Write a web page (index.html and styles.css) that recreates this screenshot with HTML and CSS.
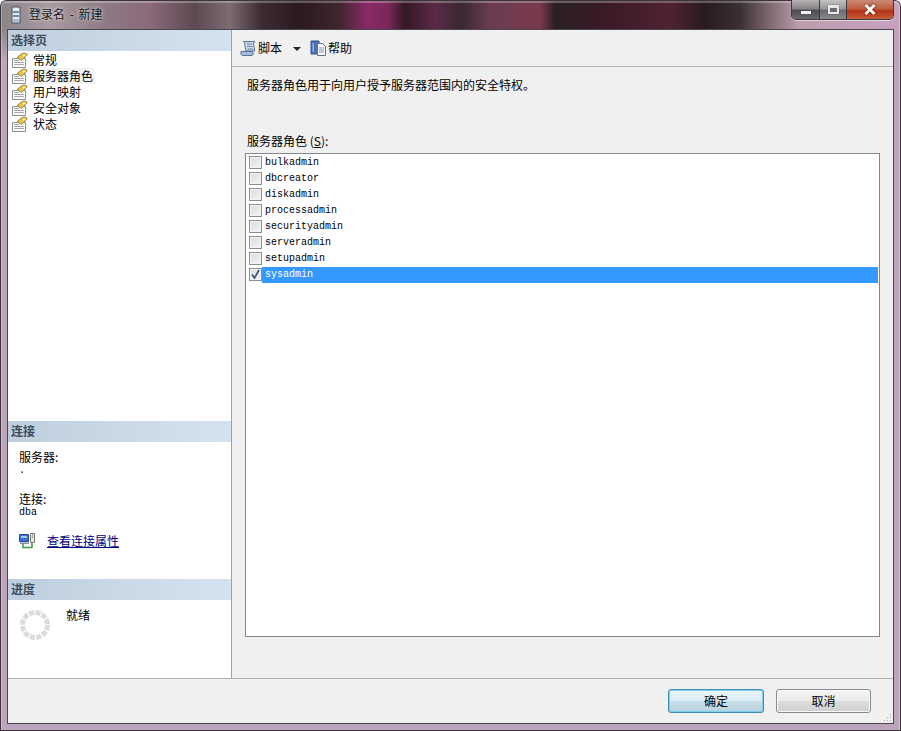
FILE: index.html
```html
<!DOCTYPE html>
<html lang="zh-CN">
<head>
<meta charset="utf-8">
<title>登录名 - 新建</title>
<link rel="stylesheet" href="styles.css">
</head>
<body>
<svg class="defs" width="0" height="0" aria-hidden="true">
  <symbol id="page" viewBox="0 0 16 16">
    <path d="M0.5 6.5H13.5V15.5H0.5Z" fill="#fafafa" stroke="#8f9088"/>
    <path d="M2 8.5H7M2 10.5H12M2 12.5H12" stroke="#a4a8b0"/>
    <path d="M5 5.5L10 1.5L13 1L15.5 2.5L13 5L9.5 8.5Z" fill="#e8c050" stroke="#8a7428" stroke-width=".8"/>
    <path d="M11 2.2L14.4 2.6L11 5.2Z" fill="#fff0a8"/>
  </symbol>
</svg>
<div class="window">
  <header class="titlebar">
    <svg class="app-icon" width="10" height="18" viewBox="0 0 10 18">
      <path d="M1 1H9V17H1Z" fill="#e4eaf0" stroke="#46505c"/>
      <path d="M2 5H8V7H2ZM2 9H8V11H2Z" fill="#6d8aa8"/>
      <path d="M2 13H8V16H2Z" fill="#a8bed2"/>
    </svg>
    <span class="title-text">登录名 - 新建</span>
    <div class="caption">
      <div class="cap cap-min"><span class="min-glyph"></span></div>
      <div class="cap cap-max"><span class="max-glyph"></span></div>
      <div class="cap cap-close">
        <svg width="12" height="11" viewBox="0 0 12 11"><path d="M1.5 1L10.5 10M10.5 1L1.5 10" stroke="#fff" stroke-width="2.8"/></svg>
      </div>
    </div>
  </header>
  <div class="client">
    <div class="main">
      <aside class="sidebar">
        <section class="side-pages">
          <h2 class="side-head">选择页</h2>
          <ul class="nav">
            <li class="nav-item"><svg class="nav-icon"><use href="#page"/></svg><span class="nav-label">常规</span></li>
            <li class="nav-item"><svg class="nav-icon"><use href="#page"/></svg><span class="nav-label nav-current">服务器角色</span></li>
            <li class="nav-item"><svg class="nav-icon"><use href="#page"/></svg><span class="nav-label">用户映射</span></li>
            <li class="nav-item"><svg class="nav-icon"><use href="#page"/></svg><span class="nav-label">安全对象</span></li>
            <li class="nav-item"><svg class="nav-icon"><use href="#page"/></svg><span class="nav-label">状态</span></li>
          </ul>
        </section>
        <section class="side-conn">
          <h2 class="side-head">连接</h2>
          <div class="conn-body">
            <div class="conn-label">服务器:</div>
            <div class="conn-value">.</div>
            <div class="conn-label conn-gap">连接:</div>
            <div class="conn-value">dba</div>
            <div class="conn-link-row">
              <svg width="16" height="16" viewBox="0 0 16 16">
                <path d="M0.5 1.5H9.5V8.5H0.5Z" fill="#3b6fd0" stroke="#2a4a90"/>
                <path d="M2 3H8V5H2Z" fill="#a8c8f4"/>
                <path d="M1 9.5H10V11H1Z" fill="#7a8ca8"/>
                <path d="M11.5 0.5H15.5V9.5H11.5Z" fill="#e4e4e0" stroke="#7a7a70"/>
                <path d="M13 2H14M13 4H14" stroke="#667"/>
                <path d="M4 11V14.5H13V10" fill="none" stroke="#3aa040" stroke-width="1.5"/>
              </svg>
              <a class="conn-link" href="#">查看连接属性</a>
            </div>
          </div>
        </section>
        <section class="side-progress">
          <h2 class="side-head">进度</h2>
          <div class="progress-body">
            <svg class="spinner" width="30" height="30" viewBox="0 0 30 30">
              <circle cx="15" cy="15" r="12.5" fill="none" stroke="#dcdcdc" stroke-width="5" stroke-dasharray="5.2 1.35"/>
            </svg>
            <span class="progress-text">就绪</span>
          </div>
        </section>
      </aside>
      <main class="pane">
        <div class="toolbar">
          <div class="tool">
            <svg width="17" height="17" viewBox="0 0 17 17">
              <path d="M3.5 1.5H15C13.5 2.5 13.3 4 13.8 6L14.8 11H6L5 6C4.5 4 5 2.5 3.5 1.5Z" fill="#cfdcea" stroke="#54709a"/>
              <path d="M1 11.5H12.5C13.5 13 13.5 15 12 15.5H3C1 15.5 .3 13 1 11.5Z" fill="#a8bcd6" stroke="#54709a"/>
              <path d="M6.5 4H12.5M7 6.5H12.5M7.5 9H13" stroke="#6a84aa"/>
            </svg>
            <span>脚本</span>
          </div>
          <span class="tool-arrow"></span>
          <div class="tool tool-help">
            <svg width="17" height="17" viewBox="0 0 17 17">
              <path d="M1 1H9V14H1Z" fill="#4a70b8" stroke="#34508c"/>
              <path d="M2.5 3H4V12H2.5Z" fill="#8fb0e0"/>
              <path d="M7.5 3.5H12.5L15.5 6.5V15.5H7.5Z" fill="#f6f8fc" stroke="#5a6f92"/>
              <path d="M9 8H14M9 10H14M9 12H14" stroke="#8a9ab4"/>
            </svg>
            <span>帮助</span>
          </div>
        </div>
        <div class="content">
          <p class="desc">服务器角色用于向用户授予服务器范围内的安全特权。</p>
          <label class="list-label">服务器角色 (<u>S</u>):</label>
          <div class="list">
            <div class="row"><span class="check"></span><span class="row-text">bulkadmin</span></div>
            <div class="row"><span class="check"></span><span class="row-text">dbcreator</span></div>
            <div class="row"><span class="check"></span><span class="row-text">diskadmin</span></div>
            <div class="row"><span class="check"></span><span class="row-text">processadmin</span></div>
            <div class="row"><span class="check"></span><span class="row-text">securityadmin</span></div>
            <div class="row"><span class="check"></span><span class="row-text">serveradmin</span></div>
            <div class="row"><span class="check"></span><span class="row-text">setupadmin</span></div>
            <div class="row"><span class="check"><svg width="11" height="11" viewBox="0 0 11 11"><path d="M2 5.5L4.5 9L9 1" fill="none" stroke="#3c4f78" stroke-width="1.6"/></svg></span><span class="row-text row-selected">sysadmin</span></div>
          </div>
        </div>
      </main>
    </div>
    <footer class="footer">
      <button class="btn btn-default" type="button">确定</button>
      <button class="btn" type="button">取消</button>
      <svg class="grip" width="10" height="10" viewBox="0 0 10 10">
        <path d="M8 2H9V3H8ZM5 5H6V6H5ZM8 5H9V6H8ZM2 8H3V9H2ZM5 8H6V9H5ZM8 8H9V9H8Z" fill="#b0b0b0"/>
      </svg>
    </footer>
  </div>
</div>
</body>
</html>
```
FILE: styles.css
```css
* { box-sizing: border-box; }
html, body { margin: 0; padding: 0; }
body {
  width: 901px;
  height: 731px;
  overflow: hidden;
  background: #fff;
  font-family: "Noto Sans CJK SC", "Liberation Sans", sans-serif;
  font-size: 12px;
  line-height: 16px;
  color: #000;
}
.defs { position: absolute; }
.window {
  width: 901px;
  height: 731px;
  display: flex;
  flex-direction: column;
  border-radius: 6px 6px 0 0;
  box-shadow: inset 0 0 0 1px #3c3438, inset 0 1px 0 2px rgba(255,255,255,.28);
  background:
    linear-gradient(180deg, rgba(190,165,190,0) 0, rgba(190,165,190,0) 29px, rgba(190,165,190,1) 60px),
    linear-gradient(90deg, #8a8488 0, #a89aa0 50px, #8e7a84 105px, #8a6a78 150px, #5c4a52 195px, #7c6c72 230px, #3c2a32 262px, #2a1a20 300px, #40262f 340px, #8a2a68 368px, #7a2858 388px, #341824 405px, #5a2a48 435px, #3a2830 462px, #6a3c52 490px, #7a3a4c 540px, #2a1f24 555px, #3c1a28 610px, #4e2232 670px, #2a1a20 705px, #3a3034 740px, #806a72 770px, #bc9eae 800px, #c8a2c0 901px);
}
.titlebar {
  height: 29px;
  flex: none;
  display: flex;
  align-items: flex-start;
  padding-left: 11px;
}
.app-icon { margin-top: 6px; flex: none; }
.title-text {
  margin: 6px 0 0 8px;
  color: #141414;
  word-spacing: 2px;
  text-shadow: 0 0 4px rgba(255,255,255,.7), 0 0 2px rgba(255,255,255,.5);
}
.caption {
  margin-left: auto;
  margin-right: 7px;
  width: 103px;
  height: 20px;
  display: flex;
  border: 1px solid #3c3c40;
  border-top: 0;
  border-radius: 0 0 5px 5px;
  overflow: hidden;
  box-shadow: 0 1px 0 rgba(255,255,255,.55);
}
.cap {
  height: 100%;
  display: flex;
  align-items: center;
  justify-content: center;
  border-right: 1px solid #3c3c40;
}
.cap-min { width: 28px; background: linear-gradient(180deg, #b4b0b2 0, #88868a 45%, #4f4c50 55%, #6c6a6e 100%); }
.cap-max { width: 27px; background: linear-gradient(180deg, #c4c2c4 0, #9a989c 45%, #6e6c70 55%, #8a888c 100%); }
.cap-close { flex: 1; border-right: 0; background: linear-gradient(180deg, #c88a76 0, #c25c3e 45%, #b23418 58%, #c85c38 100%); }
.min-glyph {
  width: 10px;
  height: 3px;
  margin-top: 6px;
  background: #f4f4f4;
  box-shadow: 0 0 1px #333;
}
.max-glyph {
  width: 11px;
  height: 9px;
  border: 2px solid #e8e8e8;
  border-top-width: 3px;
  background: #6c6a70;
  box-shadow: 0 0 1px #333;
}
.cap-close svg { display: block; filter: drop-shadow(0 0 1px #5a1808); }
.client {
  flex: 1;
  min-height: 0;
  margin: 0 7px 7px;
  display: flex;
  flex-direction: column;
  border: 1px solid #4a4650;
  background: #f0f0f0;
}
.main {
  flex: 1;
  min-height: 0;
  display: flex;
}
.sidebar {
  width: 224px;
  flex: none;
  display: flex;
  flex-direction: column;
  background: #fff;
  border-right: 1px solid #a0a0a0;
}
.side-pages { height: 391px; }
.side-conn { height: 158px; }
.side-progress { flex: 1; }
.side-head {
  margin: 0;
  height: 21px;
  padding: 2px 0 0 3px;
  font-size: 12px;
  font-weight: 700;
  line-height: 16px;
  color: #3c4c5a;
  background: linear-gradient(90deg, #bfcedc 0, #d5e3f0 100%);
}
.nav { list-style: none; margin: 0; padding: 1px 0 0 4px; }
.nav-item { display: flex; align-items: center; height: 16px; }
.nav-icon { width: 16px; height: 16px; flex: none; }
.nav-label { margin-left: 5px; padding: 0 1px 0 0; line-height: 16px; }
.nav-current { margin-left: 4px; padding: 0 2px 0 1px; background: #f2f2f2; }
.conn-body { padding: 7px 0 0 11px; }
.conn-label { height: 16px; }
.conn-value {
  height: 12px;
  line-height: 12px;
  font-family: "Liberation Mono", monospace;
  font-size: 10px;
}
.conn-gap { margin-top: 14px; }
.conn-link-row {
  display: flex;
  align-items: center;
  margin-top: 14px;
}
.conn-link { margin-left: 12px; color: #000080; text-decoration: underline; }
.progress-body {
  display: flex;
  align-items: flex-start;
  padding: 10px 0 0 12px;
}
.spinner { flex: none; }
.progress-text { margin: -3px 0 0 16px; }
.pane {
  flex: 1;
  min-width: 0;
  display: flex;
  flex-direction: column;
}
.toolbar {
  height: 37px;
  flex: none;
  display: flex;
  align-items: center;
  padding-left: 8px;
  border-bottom: 1px solid #b4b4b4;
}
.tool { display: flex; align-items: center; gap: 1px; }
.tool-arrow {
  width: 0;
  height: 0;
  margin: 1px 0 0 11px;
  border: 4px solid transparent;
  border-top: 4px solid #222;
  border-bottom: 0;
}
.tool-help { margin-left: 9px; }
.content {
  flex: 1;
  min-height: 0;
  display: flex;
  flex-direction: column;
  padding: 10px 13px 41px 13px;
}
.desc { margin: 0 0 40px 2px; }
.list-label { display: block; margin: 0 0 4px 2px; }
.list-label u { text-decoration: underline; }
.list {
  flex: 1;
  min-height: 0;
  padding: 1px 1px 0 0;
  background: #fff;
  border: 1px solid #828790;
}
.row {
  height: 16px;
  display: flex;
  align-items: center;
  padding-left: 3px;
  font-family: "Liberation Mono", monospace;
  font-size: 10px;
  line-height: 14px;
}
.check {
  width: 13px;
  height: 13px;
  flex: none;
  margin-top: -2px;
  display: flex;
  align-items: center;
  justify-content: center;
  border: 1px solid #8e8f8f;
  background: linear-gradient(135deg, #dcdcdc 0, #f2f2f2 100%);
  box-shadow: inset 0 0 0 1px #f4f4f4;
}
.check svg { display: block; }
.row-text {
  flex: 1;
  height: 16px;
  padding: 0 0 0 3px;
  line-height: 16px;
}
.row-selected { background: #3399ff; color: #fff; }
.footer {
  height: 45px;
  flex: none;
  position: relative;
  display: flex;
  justify-content: flex-end;
  align-items: flex-start;
  gap: 12px;
  padding: 10px 22px 0 0;
  border-top: 1px solid #b0b0b0;
}
.btn {
  width: 95px;
  height: 24px;
  padding: 0;
  font: inherit;
  color: #000;
  border: 1px solid #8a8a8a;
  border-radius: 3px;
  background: linear-gradient(180deg, #f4f4f4 0, #ebebeb 48%, #dcdcdc 52%, #cfcfcf 100%);
  box-shadow: inset 0 0 0 1px #fbfbfb;
}
.btn-default {
  width: 96px;
  border-color: #3f8fb0;
  background: linear-gradient(180deg, #eaf5fb 0, #dcecf5 48%, #c8dee9 52%, #b8d2df 100%);
  box-shadow: inset 0 0 0 1px #7fd0ee;
}
.grip { position: absolute; right: 1px; bottom: 1px; }
```
